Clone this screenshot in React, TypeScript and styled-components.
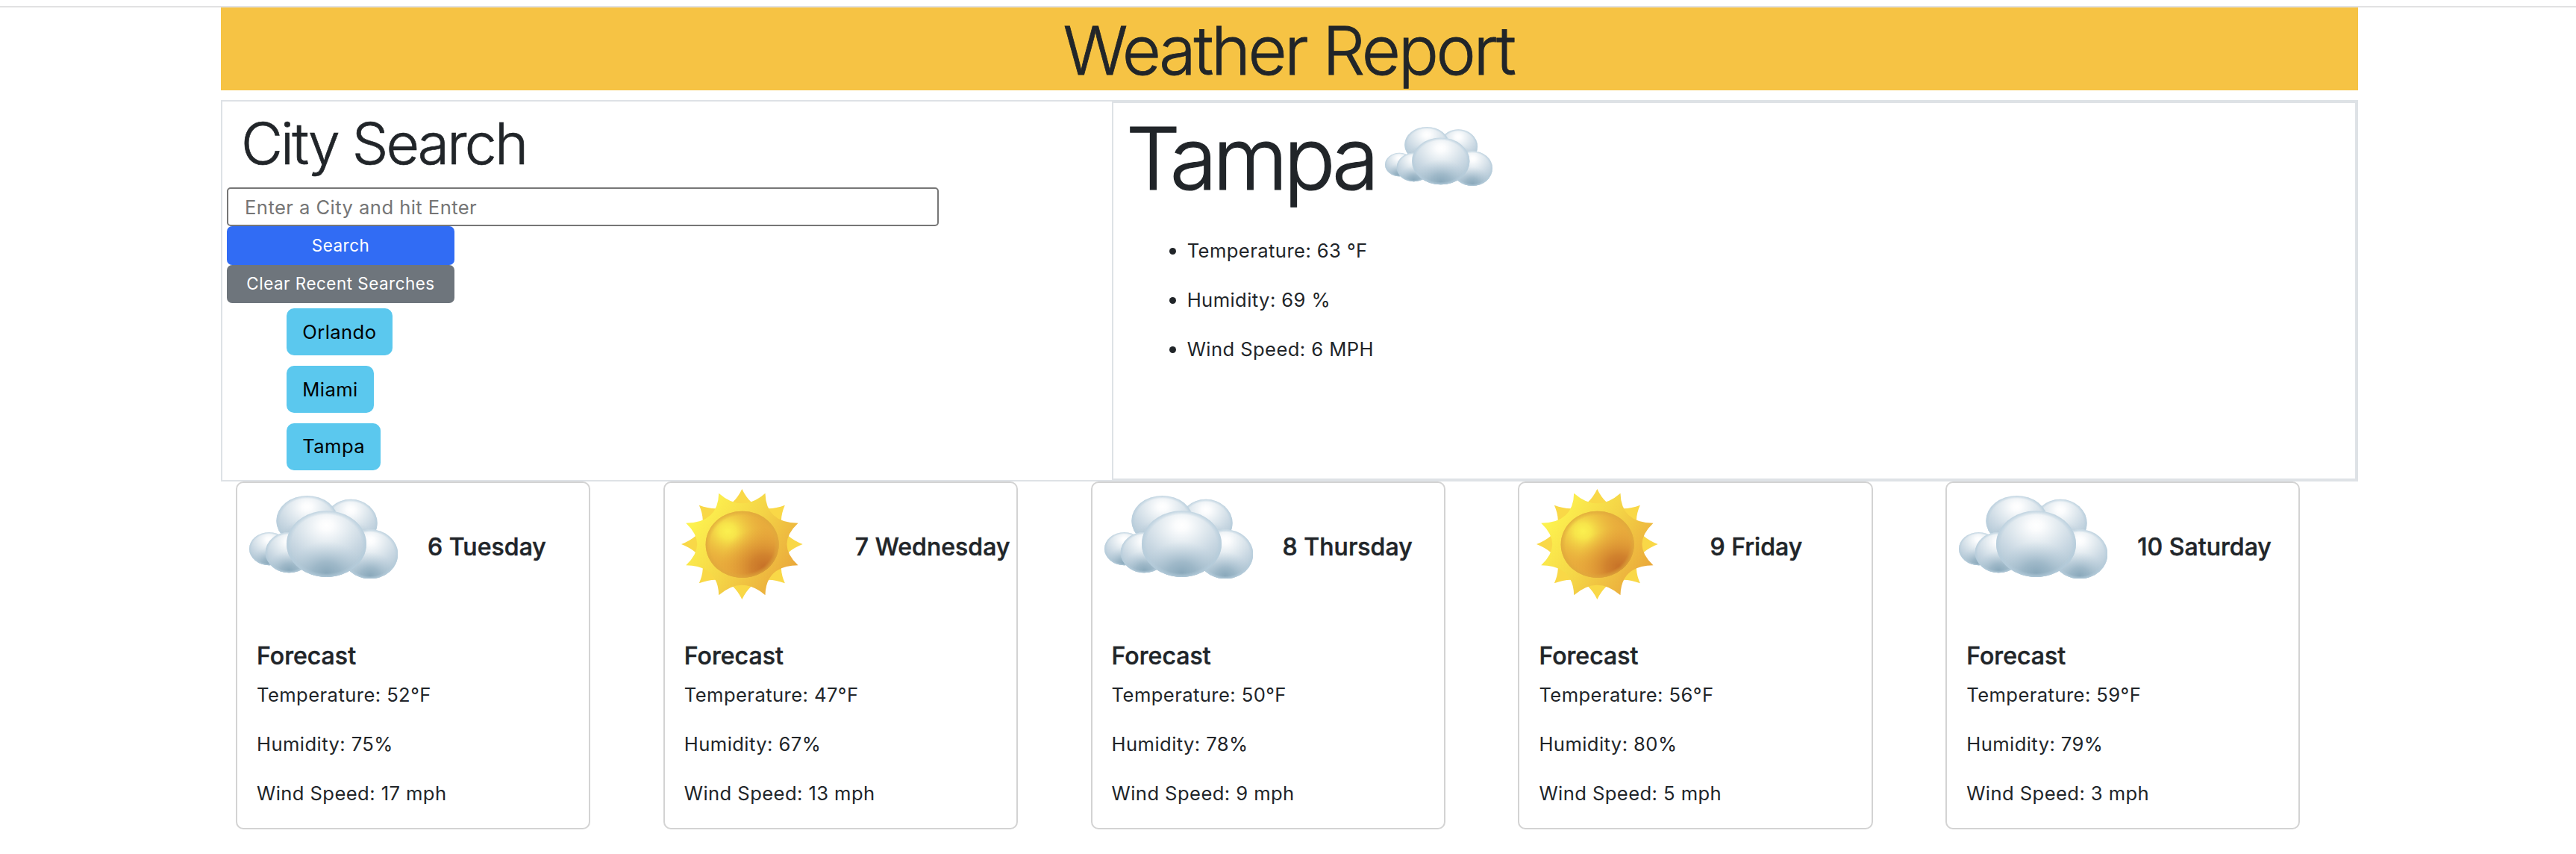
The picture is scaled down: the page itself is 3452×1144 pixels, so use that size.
import React from "react";
import styled, { createGlobalStyle } from "styled-components";

const GlobalStyle = createGlobalStyle`
  *, *::before, *::after { box-sizing: border-box; }
  body {
    margin: 0;
    background: #fff;
    color: #212529;
    font-family: Inter, "Liberation Sans", sans-serif;
    font-size: 25.6px;
    line-height: 39.6px;
    letter-spacing: 0.42px;
  }
  h1, h2, h3, h4, p, ul { margin: 0; padding: 0; font-weight: inherit; }
`;

const Page = styled.div`
  padding-top: 8px;
  min-height: 1144px;
`;

const TopRule = styled.div`
  height: 2px;
  background: #e1e1e2;
`;

const Container = styled.main`
  width: 2864px;
  margin-left: 296px;
`;

const Banner = styled.h1`
  && { font-weight: 300; padding: 4px 3px 0 0; }
  height: 111px;
  background: #f6c344;
  text-align: center;
  font-size: 90px;
  line-height: 107px;
  letter-spacing: -3.35px;
  -webkit-text-stroke: 0.8px #212529;
`;

const Panels = styled.section`
  display: grid;
  grid-template-columns: 5fr 7fr;
  height: 511px;
  margin-top: 13px;
  border: 2px solid #dee2e6;
`;

const SearchPanel = styled.div`
  display: flex;
  flex-direction: column;
  align-items: flex-start;
  padding: 9px 6px 0;
`;

const SearchTitle = styled.h2`
  && { font-weight: 300; margin: 0 0 11px 19px; }
  font-size: 76.8px;
  line-height: 95px;
  letter-spacing: -2.8px;
  -webkit-text-stroke: 0.7px #212529;
`;

const CityInput = styled.input`
  width: 954px;
  height: 52px;
  padding: 0 22px;
  border: 2px solid #767676;
  border-radius: 5px;
  background: #fff;
  font: inherit;
  letter-spacing: 0.44px;
  outline: none;
  &::placeholder { color: #757575; opacity: 1; }
`;

const ActionButton = styled.button<{ $color: string; $height: number }>`
  width: 305px;
  height: ${(p) => p.$height}px;
  padding: 0 0 1px;
  border: 0;
  border-radius: 7px;
  background: ${(p) => p.$color};
  color: #fff;
  font: inherit;
  font-size: 22.4px;
  letter-spacing: 0.52px;
`;

const RecentList = styled.div`
  display: flex;
  flex-direction: column;
  align-items: flex-start;
  gap: 13.5px;
  margin: 7px 0 0 80px;
`;

const RecentCity = styled.button`
  height: 63.3px;
  padding: 0 21.3px;
  border: 0;
  border-radius: 10px;
  background: #5bc8ee;
  color: #000;
  font: inherit;
  letter-spacing: 0.4px;
`;

const CurrentPanel = styled.div`
  border: 2px solid #dee2e6;
  padding: 3px 15px 0;
`;

const CurrentHeading = styled.div`
  display: flex;
  align-items: flex-start;
  height: 142px;
`;

const CurrentCity = styled.h2`
  && { font-weight: 300; padding-left: 2px; }
  width: 349px;
  font-size: 115.2px;
  line-height: 142px;
  letter-spacing: -5.7px;
  white-space: nowrap;
  -webkit-text-stroke: 1.2px #212529;
`;

const CurrentIcon = styled.div`
  display: flex;
  margin-top: 29px;
`;

const Readings = styled.ul`
  display: flex;
  flex-direction: column;
  gap: 26.4px;
  && { margin-top: 32.6px; padding-left: 60px; }
  list-style: none;
`;

const Reading = styled.li`
  display: flex;
  align-items: center;
  gap: 15px;
  &::before {
    content: "";
    width: 9px;
    height: 9px;
    border-radius: 50%;
    background: #212529;
    margin-top: 2px;
  }
`;

const Forecasts = styled.section`
  display: grid;
  grid-template-columns: repeat(5, 1fr);
`;

const Card = styled.article`
  width: 475.2px;
  height: 466px;
  margin-left: 20px;
  border: 2px solid #d3d3d3;
  border-radius: 10px;
  overflow: hidden;
`;

const CardHead = styled.header`
  display: flex;
  height: 211.6px;
`;

const IconSlot = styled.div<{ $sun: boolean }>`
  display: flex;
  align-items: flex-start;
  width: 255px;
  padding: ${(p) => (p.$sun ? "8px 0 0 22.5px" : "16.7px 0 0 16px")};
`;

const CardTitle = styled.h3`
  && { font-weight: 500; }
  font-size: 32px;
  letter-spacing: 0.05px;
  white-space: nowrap;
  -webkit-text-stroke: 0.5px #212529;
`;

const Day = styled(CardTitle)`
  && { padding-top: 66.4px; }
`;

const CardBody = styled.div`
  padding-left: 26px;
`;

const Facts = styled.div`
  display: flex;
  flex-direction: column;
  gap: 26.4px;
  margin-top: 12.7px;
`;

const puffs = [
  [450, 152, 107, 97],
  [275, 142, 124, 101],
  [122, 254.5, 80, 66.5],
  [202, 269.5, 95, 81.5],
  [528, 276, 112, 99],
  [352.5, 235, 160.5, 133],
];

function Cloud({ width, height, id }: { width: number; height: number; id: string }) {
  return (
    <svg width={width} height={height} viewBox="42 41 598 334" preserveAspectRatio="none">
      <defs>
        <radialGradient id={`${id}-body`} cx="0.5" cy="0.22" r="0.8">
          <stop offset="0" stopColor="#ffffff" />
          <stop offset="0.1" stopColor="#fbfcfd" />
          <stop offset="0.38" stopColor="#dfe8ee" />
          <stop offset="0.62" stopColor="#c8d7e2" />
          <stop offset="1" stopColor="#a9c1d0" />
        </radialGradient>
        <radialGradient id={`${id}-shade`} cx="0.5" cy="0.94" r="0.48">
          <stop offset="0" stopColor="#85a5b8" stopOpacity="0.9" />
          <stop offset="0.35" stopColor="#8eacbe" stopOpacity="0.65" />
          <stop offset="1" stopColor="#b3c9d7" stopOpacity="0" />
        </radialGradient>
        <radialGradient id={`${id}-rim`}>
          <stop offset="0.88" stopColor="#b6cddc" stopOpacity="0" />
          <stop offset="1" stopColor="#b6cddc" stopOpacity="0.8" />
        </radialGradient>
      </defs>
      {puffs.map(([cx, cy, rx, ry], i) => (
        <g key={i}>
          {["body", "shade", "rim"].map((layer) => (
            <ellipse key={layer} cx={cx} cy={cy} rx={rx} ry={ry} fill={`url(#${id}-${layer})`} />
          ))}
        </g>
      ))}
    </svg>
  );
}

const at = (r: number, deg: number) => {
  const a = (deg * Math.PI) / 180;
  return `${(284 + 244 * r * Math.sin(a)).toFixed(1)} ${(252 - 222 * r * Math.cos(a)).toFixed(1)}`;
};

const backRays =
  `M${at(1, 0)}` +
  Array.from({ length: 8 }, (_, i) => {
    const a = i * 45;
    return `Q${at(0.86, a + 4)} ${at(0.777, a + 11.25)}L${at(0.6, a + 22.5)}L${at(0.777, a + 33.75)}Q${at(0.86, a + 41)} ${at(1, a + 45)}`;
  }).join("") +
  "Z";

const frontRays =
  `M${at(1, 22.5)}` +
  Array.from({ length: 8 }, (_, i) => {
    const a = 22.5 + i * 45;
    return `Q${at(0.554, a + 22.5)} ${at(1, a + 45)}`;
  }).join("") +
  "Z";

function Sun({ id }: { id: string }) {
  return (
    <svg width="162.7" height="148" viewBox="40 30 488 444" preserveAspectRatio="none">
      <defs>
        <linearGradient id={`${id}-rays`} x1="0.08" y1="0.25" x2="0.95" y2="0.75">
          <stop offset="0" stopColor="#fdf24f" />
          <stop offset="0.5" stopColor="#f4d346" />
          <stop offset="1" stopColor="#eaa93b" />
        </linearGradient>
        <radialGradient id={`${id}-light`} cx="0.3" cy="0.3" r="0.56">
          <stop offset="0" stopColor="#fbf04f" />
          <stop offset="0.2" stopColor="#f8e84b" stopOpacity="0.95" />
          <stop offset="1" stopColor="#e9ac3c" stopOpacity="0" />
        </radialGradient>
        <radialGradient id={`${id}-dark`} cx="0.8" cy="0.84" r="0.6">
          <stop offset="0" stopColor="#c67027" />
          <stop offset="0.3" stopColor="#cd7b2b" stopOpacity="0.85" />
          <stop offset="1" stopColor="#e6a038" stopOpacity="0" />
        </radialGradient>
        <radialGradient id={`${id}-rim`}>
          <stop offset="0.87" stopColor="#dfa93b" stopOpacity="0" />
          <stop offset="1" stopColor="#dfa93b" stopOpacity="0.75" />
        </radialGradient>
      </defs>
      <path d={backRays} fill="#f9d847" />
      <path d={frontRays} fill={`url(#${id}-rays)`} />
      <ellipse cx="285" cy="253" rx="147" ry="134" fill="#e8ab3c" />
      {["light", "dark", "rim"].map((layer) => (
        <ellipse key={layer} cx="285" cy="253" rx="147" ry="134" fill={`url(#${id}-${layer})`} />
      ))}
    </svg>
  );
}

const days = [
  { day: "6 Tuesday", sun: false, temp: 52, humidity: 75, wind: 17 },
  { day: "7 Wednesday", sun: true, temp: 47, humidity: 67, wind: 13 },
  { day: "8 Thursday", sun: false, temp: 50, humidity: 78, wind: 9 },
  { day: "9 Friday", sun: true, temp: 56, humidity: 80, wind: 5 },
  { day: "10 Saturday", sun: false, temp: 59, humidity: 79, wind: 3 },
];

export default function App() {
  return (
    <Page>
      <GlobalStyle />
      <TopRule />
      <Container>
        <Banner>Weather Report</Banner>
        <Panels>
          <SearchPanel>
            <SearchTitle>City Search</SearchTitle>
            <CityInput placeholder="Enter a City and hit Enter" />
            <ActionButton $color="#316cf4" $height={52.3}>Search</ActionButton>
            <ActionButton $color="#6e757c" $height={50.7}>Clear Recent Searches</ActionButton>
            <RecentList>
              {["Orlando", "Miami", "Tampa"].map((city) => (
                <RecentCity key={city}>{city}</RecentCity>
              ))}
            </RecentList>
          </SearchPanel>
          <CurrentPanel>
            <CurrentHeading>
              <CurrentCity>Tampa</CurrentCity>
              <CurrentIcon>
                <Cloud width={144} height={79} id="current" />
              </CurrentIcon>
            </CurrentHeading>
            <Readings>
              <Reading>Temperature: 63 °F</Reading>
              <Reading>Humidity: 69 %</Reading>
              <Reading>Wind Speed: 6 MPH</Reading>
            </Readings>
          </CurrentPanel>
        </Panels>
        <Forecasts>
          {days.map((d, i) => (
            <Card key={d.day}>
              <CardHead>
                <IconSlot $sun={d.sun}>
                  {d.sun ? <Sun id={`day${i}`} /> : <Cloud width={199.3} height={111.3} id={`day${i}`} />}
                </IconSlot>
                <Day>{d.day}</Day>
              </CardHead>
              <CardBody>
                <CardTitle>Forecast</CardTitle>
                <Facts>
                  <p>Temperature: {d.temp}°F</p>
                  <p>Humidity: {d.humidity}%</p>
                  <p>Wind Speed: {d.wind} mph</p>
                </Facts>
              </CardBody>
            </Card>
          ))}
        </Forecasts>
      </Container>
    </Page>
  );
}
